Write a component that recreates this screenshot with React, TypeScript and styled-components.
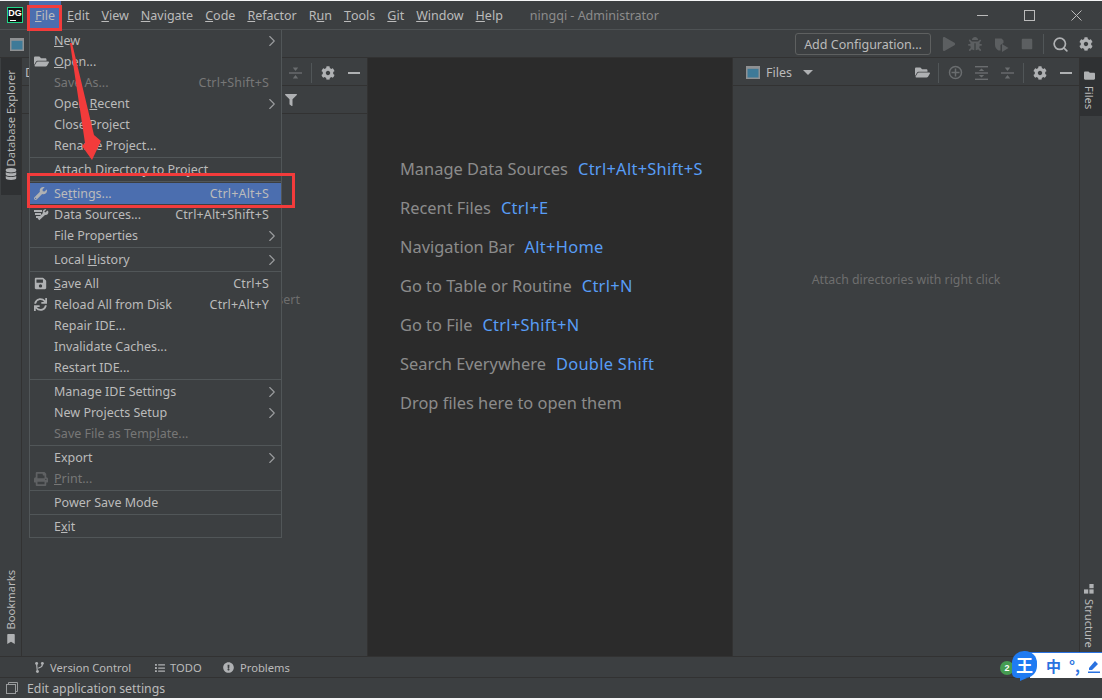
import React from 'react';
import styled, { createGlobalStyle } from 'styled-components';
import {
  FaBookmark,
  FaBug,
  FaCog,
  FaDatabase,
  FaExclamationCircle,
  FaFilter,
  FaFolder,
  FaFolderOpen,
  FaList,
  FaPlay,
  FaPrint,
  FaSave,
  FaStop,
  FaSync,
  FaWrench,
} from 'react-icons/fa';
import { ChevronRight, Search } from 'lucide-react';

const GlobalStyle = createGlobalStyle`
  html, body { margin: 0; padding: 0; background: #3c3f41; }
  * { box-sizing: border-box; }
  body { font-family: "Noto Sans", "Open Sans", sans-serif; overflow: hidden; }
`;

// "_" marks the mnemonic letter
const Mnemonic = ({ label }: { label: string }) => {
  const i = label.indexOf('_');
  if (i < 0) return <>{label}</>;
  return (
    <>
      {label.slice(0, i)}
      <u>{label[i + 1]}</u>
      {label.slice(i + 2)}
    </>
  );
};

const menus = ['_File', '_Edit', '_View', '_Navigate', '_Code', '_Refactor', 'R_un', '_Tools', '_Git', '_Window', '_Help'];

type Item = { label: string; keys?: string; sub?: boolean; off?: boolean; on?: boolean; icon?: React.ReactNode } | 'sep';

const DataSourcesIcon = () => (
  <svg width="15" height="14" viewBox="0 0 15 14" fill="#afb1b3">
    <rect x="0" y="2" width="8" height="2" />
    <rect x="1" y="5" width="6" height="2" />
    <rect x="2" y="8" width="4" height="2" />
    <path d="M13.5 2.5l-2.2 2-1-1L12.4 1.4C10.6.7 8.8 1.8 8.7 3.7c0 .5.1.9.2 1.2L3.6 10.6l1.7 1.7L11 7c1.9.4 3.5-1.1 3.4-3 0-.5-.3-1-.9-1.5z" />
  </svg>
);

const fileMenu: Item[] = [
  { label: '_New', sub: true },
  { label: '_Open...', icon: <FaFolderOpen size={15} color="#afb1b3" /> },
  { label: 'Save As...', keys: 'Ctrl+Shift+S', off: true },
  { label: 'Open _Recent', sub: true },
  { label: 'Close Project' },
  { label: 'Rename Project...' },
  'sep',
  { label: 'Attach Directory to Project' },
  'sep',
  { label: 'Se_ttings...', keys: 'Ctrl+Alt+S', on: true, icon: <FaWrench size={13} color="#afb1b3" /> },
  { label: 'Data Sources...', keys: 'Ctrl+Alt+Shift+S', icon: <DataSourcesIcon /> },
  { label: 'File Properties', sub: true },
  'sep',
  { label: 'Local _History', sub: true },
  'sep',
  { label: '_Save All', keys: 'Ctrl+S', icon: <FaSave size={13} color="#afb1b3" /> },
  { label: 'Reload All from Disk', keys: 'Ctrl+Alt+Y', icon: <FaSync size={13} color="#afb1b3" /> },
  { label: 'Repair IDE...' },
  { label: 'Invalidate Caches...' },
  { label: 'Restart IDE...' },
  'sep',
  { label: 'Manage IDE Settings', sub: true },
  { label: 'New Projects Setup', sub: true },
  { label: 'Save File as Temp_late...', off: true },
  'sep',
  { label: 'Export', sub: true },
  { label: '_Print...', off: true, icon: <FaPrint size={14} color="#5f6163" /> },
  'sep',
  { label: 'Power Save Mode' },
  'sep',
  { label: 'E_xit' },
];

const hints = [
  ['Manage Data Sources', 'Ctrl+Alt+Shift+S'],
  ['Recent Files', 'Ctrl+E'],
  ['Navigation Bar', 'Alt+Home'],
  ['Go to Table or Routine', 'Ctrl+N'],
  ['Go to File', 'Ctrl+Shift+N'],
  ['Search Everywhere', 'Double Shift'],
  ['Drop files here to open them', ''],
];

const WindowIcon = () => (
  <svg width="14" height="13" viewBox="0 0 14 13">
    <rect x="0.75" y="0.75" width="12.5" height="11.5" fill="#3e7a98" stroke="#8f9193" strokeWidth="1.5" />
    <rect x="1" y="1" width="12" height="1.8" fill="#8f9193" />
  </svg>
);

const ExpandIcon = () => (
  <svg width="13" height="14" viewBox="0 0 13 14" fill="#6a6d6f">
    <rect x="0" y="0" width="13" height="1.4" />
    <rect x="0" y="12.6" width="13" height="1.4" />
    <rect x="0" y="6.3" width="13" height="1.4" />
    <path d="M6.5 2.4L9.2 5H3.8zM6.5 11.6L3.8 9h5.4z" />
  </svg>
);

const CollapseIcon = () => (
  <svg width="13" height="14" viewBox="0 0 13 14" fill="#6a6d6f">
    <rect x="0" y="6.3" width="13" height="1.4" />
    <path d="M6.5 5L3.8 1.6h5.4zM6.5 9l2.7 3.4H3.8z" />
  </svg>
);

const TargetIcon = () => (
  <svg width="15" height="15" viewBox="0 0 15 15" fill="none" stroke="#6a6d6f" strokeWidth="1.5">
    <circle cx="7.5" cy="7.5" r="6" />
    <path d="M7.5 3.5v8M3.5 7.5h8" />
  </svg>
);

const MinusIcon = () => (
  <svg width="12" height="2" viewBox="0 0 12 2">
    <rect width="12" height="2" fill="#afb1b3" />
  </svg>
);

const CoverageIcon = () => (
  <svg width="15" height="15" viewBox="0 0 15 15" fill="#5c5f61">
    <path d="M1 1.5h6.5l2 2v2.6L6.5 8v5.5H4.5C2.5 12.5 1 10.5 1 8z" />
    <path d="M8 7l6.5 4L8 15z" />
  </svg>
);

const BranchIcon = () => (
  <svg width="9" height="13" viewBox="0 0 11 14" fill="#afb1b3">
    <circle cx="2" cy="2" r="1.8" />
    <circle cx="9" cy="2" r="1.8" />
    <circle cx="3" cy="12" r="1.8" />
    <path d="M1.2 3h1.6l.6 7H2zM8.2 3.4h1.6C9.8 6.5 7 7.8 4 8.4V7c2.4-.6 4.2-1.6 4.2-3.6z" />
  </svg>
);

const StatusIcon = () => (
  <svg width="12" height="12" viewBox="0 0 12 12" fill="none" stroke="#9a9c9e">
    <rect x="0.5" y="2.5" width="9" height="9" />
    <path d="M2.5 2.5v-2h9v9h-2" />
  </svg>
);

const StructureIcon = () => (
  <svg width="10" height="10" viewBox="0 0 13 13" fill="#afb1b3">
    <rect x="7" y="0" width="5.5" height="5.5" />
    <rect x="0" y="7" width="5.5" height="5.5" />
    <rect x="7" y="7" width="5.5" height="5.5" />
  </svg>
);

const ArrowMark = () => (
  <ArrowSvg viewBox="0 0 50 130" width="50" height="130">
    <polygon points="0,1 2,1 24,93 31,99 22,118 12,104 15,101" fill="#f33b3b" />
  </ArrowSvg>
);

function App() {
  return (
    <Page>
      <GlobalStyle />
      <WhiteEdge $h={1} />
      <TitleBar>
        <LogoSlot>
          <Logo>
            DG
            <LogoBar />
          </Logo>
        </LogoSlot>
        {menus.map((m, i) => (
          <MenuTitle key={m} $on={i === 0}>
            <Mnemonic label={m} />
          </MenuTitle>
        ))}
        <WindowTitle>ningqi - Administrator</WindowTitle>
        <WindowButtons>
          <WindowButton>
            <svg width="11" height="11" viewBox="0 0 11 11"><path d="M0 5.5h11" stroke="#bbb" /></svg>
          </WindowButton>
          <WindowButton>
            <svg width="11" height="11" viewBox="0 0 11 11"><rect x=".5" y=".5" width="10" height="10" fill="none" stroke="#bbb" /></svg>
          </WindowButton>
          <WindowButton>
            <svg width="11" height="11" viewBox="0 0 11 11"><path d="M.5.5l10 10M10.5.5l-10 10" stroke="#bbb" /></svg>
          </WindowButton>
        </WindowButtons>
      </TitleBar>

      <ToolBar>
        <ToolLeft>
          <WindowIcon />
        </ToolLeft>
        <ConfigButton>Add Configuration...</ConfigButton>
        <IconSlot><FaPlay size={14} color="#5c5f61" /></IconSlot>
        <IconSlot><FaBug size={14} color="#5c5f61" /></IconSlot>
        <IconSlot><CoverageIcon /></IconSlot>
        <IconSlot><FaStop size={12} color="#5c5f61" /></IconSlot>
        <Divider />
        <IconSlot><Search size={17} strokeWidth={2.4} color="#afb1b3" /></IconSlot>
        <IconSlot><FaCog size={14} color="#afb1b3" /></IconSlot>
      </ToolBar>

      <Main>
        <Stripe $pad="0 0 5px 1px">
          <StripeButton $active $side="left" $pad="12px 0 15px" $gap={1}>
            <FaDatabase size={12} color="#afb1b3" />
            <StripeLabel $side="left">Database Explorer</StripeLabel>
          </StripeButton>
          <StripeButton $side="left" $pad="7px 0" $gap={5}>
            <FaBookmark size={10} color="#afb1b3" />
            <StripeLabel $side="left">Bookmarks</StripeLabel>
          </StripeButton>
        </Stripe>

        <LeftPanel>
          <PanelHeader>
            <PanelTitle>Database Explorer</PanelTitle>
            <HeaderIcons>
              <IconSlot><CollapseIcon /></IconSlot>
              <Divider />
              <IconSlot><FaCog size={14} color="#afb1b3" /></IconSlot>
              <IconSlot><MinusIcon /></IconSlot>
            </HeaderIcons>
          </PanelHeader>
          <FilterRow>
            <IconSlot><FaFilter size={12} color="#afb1b3" /></IconSlot>
          </FilterRow>
          <EmptyText>Create a data source with Alt+Insert</EmptyText>
        </LeftPanel>

        <Editor>
          {hints.map(([text, key]) => (
            <Hint key={text}>
              {text}
              {key && <HintKey>{key}</HintKey>}
            </Hint>
          ))}
        </Editor>

        <RightPanel>
          <PanelHeader>
            <FilesTab>
              <WindowIcon />
              <PanelTitle>Files</PanelTitle>
              <DropCaret />
            </FilesTab>
            <HeaderIcons>
              <IconSlot><FaFolderOpen size={15} color="#afb1b3" /></IconSlot>
              <Divider />
              <IconSlot><TargetIcon /></IconSlot>
              <IconSlot><ExpandIcon /></IconSlot>
              <IconSlot><CollapseIcon /></IconSlot>
              <Divider />
              <IconSlot><FaCog size={14} color="#afb1b3" /></IconSlot>
              <IconSlot><MinusIcon /></IconSlot>
            </HeaderIcons>
          </PanelHeader>
          <EmptyRight>Attach directories with right click</EmptyRight>
        </RightPanel>

        <Stripe $right $pad="0 0 1px">
          <StripeButton $active $side="right" $pad="12px 4px 7px 0" $gap={5}>
            <FaFolder size={11} color="#afb1b3" />
            <StripeLabel $side="right">Files</StripeLabel>
          </StripeButton>
          <StripeButton $side="right" $pad="7px 4px 7px 0" $gap={5}>
            <StructureIcon />
            <StripeLabel $side="right">Structure</StripeLabel>
          </StripeButton>
        </Stripe>
      </Main>

      <BottomBar>
        <BottomTab $w={120} $gap={6}><BranchIcon /> Version Control</BottomTab>
        <BottomTab $w={68} $gap={5}><FaList size={10} color="#afb1b3" /> TODO</BottomTab>
        <BottomTab $w={70} $gap={6}><FaExclamationCircle size={11} color="#afb1b3" /> Problems</BottomTab>
      </BottomBar>
      <StatusBar>
        <StatusIcon />
        Edit application settings
      </StatusBar>
      <WhiteEdge $h={2} />

      <FileMenu>
        {fileMenu.map((item, i) =>
          item === 'sep' ? (
            <Separator key={i} />
          ) : (
            <MenuRow key={item.label} $on={item.on} $off={item.off}>
              <MenuIcon>{item.icon}</MenuIcon>
              <MenuLabel><Mnemonic label={item.label} /></MenuLabel>
              {item.keys && <MenuKeys>{item.keys}</MenuKeys>}
              {item.sub && <SubArrow><ChevronRight size={18} strokeWidth={1.5} /></SubArrow>}
            </MenuRow>
          ),
        )}
      </FileMenu>

      <RedBox $x={27} $y={5} $w={35} $h={26} />
      <RedBox $x={27} $y={173} $w={268} $h={35} />
      <ArrowMark />

      <Badge>2</Badge>
      <Ime>
        <ImeLogo>王</ImeLogo>
        <ImeText>中</ImeText>
        <ImeText>°,</ImeText>
        <svg width="12" height="14" viewBox="0 0 12 14" fill="#2a72e0">
          <path d="M1 9l6-7 3 3-6 6H1zM0 12.5h12V14H0z" />
        </svg>
      </Ime>
    </Page>
  );
}

const Page = styled.div`
  position: relative;
  width: 1102px;
  height: 700px;
  display: flex;
  flex-direction: column;
  overflow: hidden;
  background: #3c3f41;
  color: #bbbbbb;
  font-size: 12.5px;
`;

const WhiteEdge = styled.div<{ $h: number }>`
  flex: none;
  height: ${(p) => p.$h}px;
  background: #f4f5f6;
`;

const TitleBar = styled.div`
  flex: none;
  height: 29px;
  display: flex;
  align-items: stretch;
  border-bottom: 1px solid #4e5254;
`;

const LogoSlot = styled.div`
  width: 29px;
  display: flex;
  align-items: center;
  padding-left: 7px;
`;

const Logo = styled.div`
  position: relative;
  width: 16px;
  height: 16px;
  background: #111;
  border: 1px solid #21d789;
  color: #fff;
  font: bold 9px/11px "Liberation Sans", sans-serif;
  text-align: center;
`;

const LogoBar = styled.div`
  position: absolute;
  left: 2px;
  bottom: 1.5px;
  width: 6px;
  height: 1px;
  background: #fff;
`;

const MenuTitle = styled.div<{ $on?: boolean }>`
  display: flex;
  align-items: center;
  padding: 0 6px;
  background: ${(p) => (p.$on ? '#4b6eaf' : 'transparent')};
`;

const WindowTitle = styled.div`
  display: flex;
  align-items: center;
  margin-left: 21px;
  color: #8c8c8c;
`;

const WindowButtons = styled.div`
  margin-left: auto;
  padding-right: 2px;
  display: flex;
`;

const WindowButton = styled.div`
  width: 47px;
  display: flex;
  align-items: center;
  justify-content: center;
`;

const ToolBar = styled.div`
  flex: none;
  height: 28px;
  display: flex;
  align-items: center;
  padding: 1px 3px 0 0;
  border-bottom: 1px solid #323232;
`;

const ToolLeft = styled.div`
  margin-right: auto;
  padding-left: 10px;
  display: flex;
`;

const ConfigButton = styled.div`
  width: 136px;
  height: 22px;
  margin-right: 5px;
  display: flex;
  align-items: center;
  justify-content: center;
  border: 1px solid #5e6060;
  border-radius: 3px;
`;

const IconSlot = styled.div`
  width: 26px;
  height: 22px;
  display: flex;
  align-items: center;
  justify-content: center;
`;

const Divider = styled.div`
  width: 1px;
  height: 20px;
  margin: 0 3px;
  background: #515658;
`;

const Main = styled.div`
  flex: 1;
  min-height: 0;
  display: flex;
`;

const Stripe = styled.div<{ $right?: boolean; $pad: string }>`
  flex: none;
  width: ${(p) => (p.$right ? 23 : 22)}px;
  display: flex;
  flex-direction: column;
  justify-content: space-between;
  border-${(p) => (p.$right ? 'left' : 'right')}: 1px solid #323232;
  padding: ${(p) => p.$pad};
`;

const StripeButton = styled.div<{ $active?: boolean; $side: 'left' | 'right'; $pad: string; $gap: number }>`
  display: flex;
  flex-direction: ${(p) => (p.$side === 'left' ? 'column-reverse' : 'column')};
  align-items: center;
  gap: ${(p) => p.$gap}px;
  padding: ${(p) => p.$pad};
  background: ${(p) => (p.$active ? '#2f3133' : 'transparent')};
`;

const StripeLabel = styled.span<{ $side: 'left' | 'right' }>`
  writing-mode: vertical-rl;
  transform: ${(p) => (p.$side === 'left' ? 'rotate(180deg)' : 'none')};
  font-size: 11.2px;
  line-height: 16px;
`;

const LeftPanel = styled.div`
  flex: none;
  width: 345px;
  display: flex;
  flex-direction: column;
`;

const PanelHeader = styled.div`
  flex: none;
  height: 28px;
  display: flex;
  align-items: center;
  padding: 2px 0 0 3px;
  border-bottom: 1px solid #323232;
`;

const PanelTitle = styled.span`
  color: #bbbbbb;
`;

const HeaderIcons = styled.div`
  margin-left: auto;
  display: flex;
  align-items: center;
`;

const FilterRow = styled.div`
  flex: none;
  height: 28px;
  padding-left: 256px;
  display: flex;
  align-items: center;
  border-bottom: 1px solid #323232;
`;

const EmptyText = styled.div`
  margin-top: 177px;
  width: 210px;
  margin-left: 68px;
  white-space: nowrap;
  color: #6e6e6e;
`;

const Editor = styled.div`
  flex: none;
  width: 366px;
  padding: 99px 0 0 32px;
  display: flex;
  flex-direction: column;
  gap: 15px;
  background: #2b2b2b;
  border-left: 1px solid #323232;
  border-right: 1px solid #323232;
`;

const Hint = styled.div`
  height: 24px;
  line-height: 24px;
  font-size: 16.4px;
  color: #8b8b8b;
  white-space: nowrap;
`;

const HintKey = styled.span`
  margin-left: 10px;
  letter-spacing: 0.3px;
  color: #589df6;
`;

const RightPanel = styled.div`
  flex: 1;
  min-width: 0;
  display: flex;
  flex-direction: column;
`;

const FilesTab = styled.div`
  display: flex;
  align-items: center;
  gap: 6px;
  padding-left: 10px;
`;

const DropCaret = styled.div`
  width: 0;
  height: 0;
  margin-left: 5px;
  border-left: 5px solid transparent;
  border-right: 5px solid transparent;
  border-top: 5px solid #afb1b3;
`;

const EmptyRight = styled.div`
  margin-top: 185px;
  text-align: center;
  font-size: 12.3px;
  color: #6e6e6e;
`;

const BottomBar = styled.div`
  flex: none;
  height: 22px;
  display: flex;
  align-items: center;
  padding: 1px 0 0 35px;
  border-top: 1px solid #323232;
  border-bottom: 1px solid #323232;
  font-size: 11.2px;
`;

const BottomTab = styled.div<{ $w: number; $gap: number }>`
  width: ${(p) => p.$w}px;
  display: flex;
  align-items: center;
  gap: ${(p) => p.$gap}px;
`;

const StatusBar = styled.div`
  flex: none;
  height: 20px;
  display: flex;
  align-items: center;
  gap: 9px;
  padding-left: 6px;
  font-size: 12.3px;
`;

const FileMenu = styled.div`
  position: absolute;
  left: 29px;
  top: 30px;
  width: 253px;
  height: 508px;
  background: #3c3f41;
  border: 1px solid #515658;
  border-top: none;
`;

const MenuRow = styled.div<{ $on?: boolean; $off?: boolean }>`
  height: 21px;
  display: flex;
  align-items: center;
  padding-right: 12px;
  background: ${(p) => (p.$on ? '#4b6eaf' : 'transparent')};
  color: ${(p) => (p.$off ? '#777777' : '#bbbbbb')};
`;

const MenuIcon = styled.span`
  width: 24px;
  padding-left: 4px;
  display: flex;
  align-items: center;
`;

const MenuLabel = styled.span`
  white-space: nowrap;
`;

const MenuKeys = styled.span`
  margin-left: auto;
  letter-spacing: 0.15px;
  white-space: nowrap;
`;

const SubArrow = styled.span`
  margin-left: auto;
  display: flex;
  color: #9a9c9e;
  margin-right: -12px;
`;

const Separator = styled.div`
  height: 3px;
  padding-top: 1px;
  &::before {
    content: '';
    display: block;
    height: 1px;
    background: #515658;
  }
`;

const RedBox = styled.div<{ $x: number; $y: number; $w: number; $h: number }>`
  position: absolute;
  left: ${(p) => p.$x}px;
  top: ${(p) => p.$y}px;
  width: ${(p) => p.$w}px;
  height: ${(p) => p.$h}px;
  border: 3px solid #f33b3b;
`;

const ArrowSvg = styled.svg`
  position: absolute;
  left: 70px;
  top: 42px;
`;

const Badge = styled.div`
  position: absolute;
  left: 1000px;
  top: 661px;
  width: 14px;
  height: 14px;
  border-radius: 50%;
  background: #469c52;
  color: #fff;
  font: bold 9px/14px "Liberation Sans", sans-serif;
  text-align: center;
`;

const Ime = styled.div`
  position: absolute;
  left: 1030px;
  top: 652px;
  width: 80px;
  height: 26px;
  padding-left: 16px;
  display: flex;
  align-items: center;
  gap: 8px;
  background: #fff;
  border-top: 1px solid #2a72e0;
  color: #2a72e0;
`;

const ImeLogo = styled.div`
  position: absolute;
  left: -18px;
  top: -2px;
  width: 25px;
  height: 27px;
  display: flex;
  align-items: center;
  justify-content: center;
  border-radius: 12px 12px 12px 5px;
  background: #1f7bf2;
  color: #fff;
  font: bold 17px "Noto Sans CJK SC", sans-serif;
  &::after {
    content: '';
    position: absolute;
    left: 8px;
    bottom: -3px;
    border-top: 3px solid #1f7bf2;
    border-right: 7px solid transparent;
  }
`;

const ImeText = styled.span`
  font: bold 15px "Noto Sans CJK SC", sans-serif;
`;

export default App;
